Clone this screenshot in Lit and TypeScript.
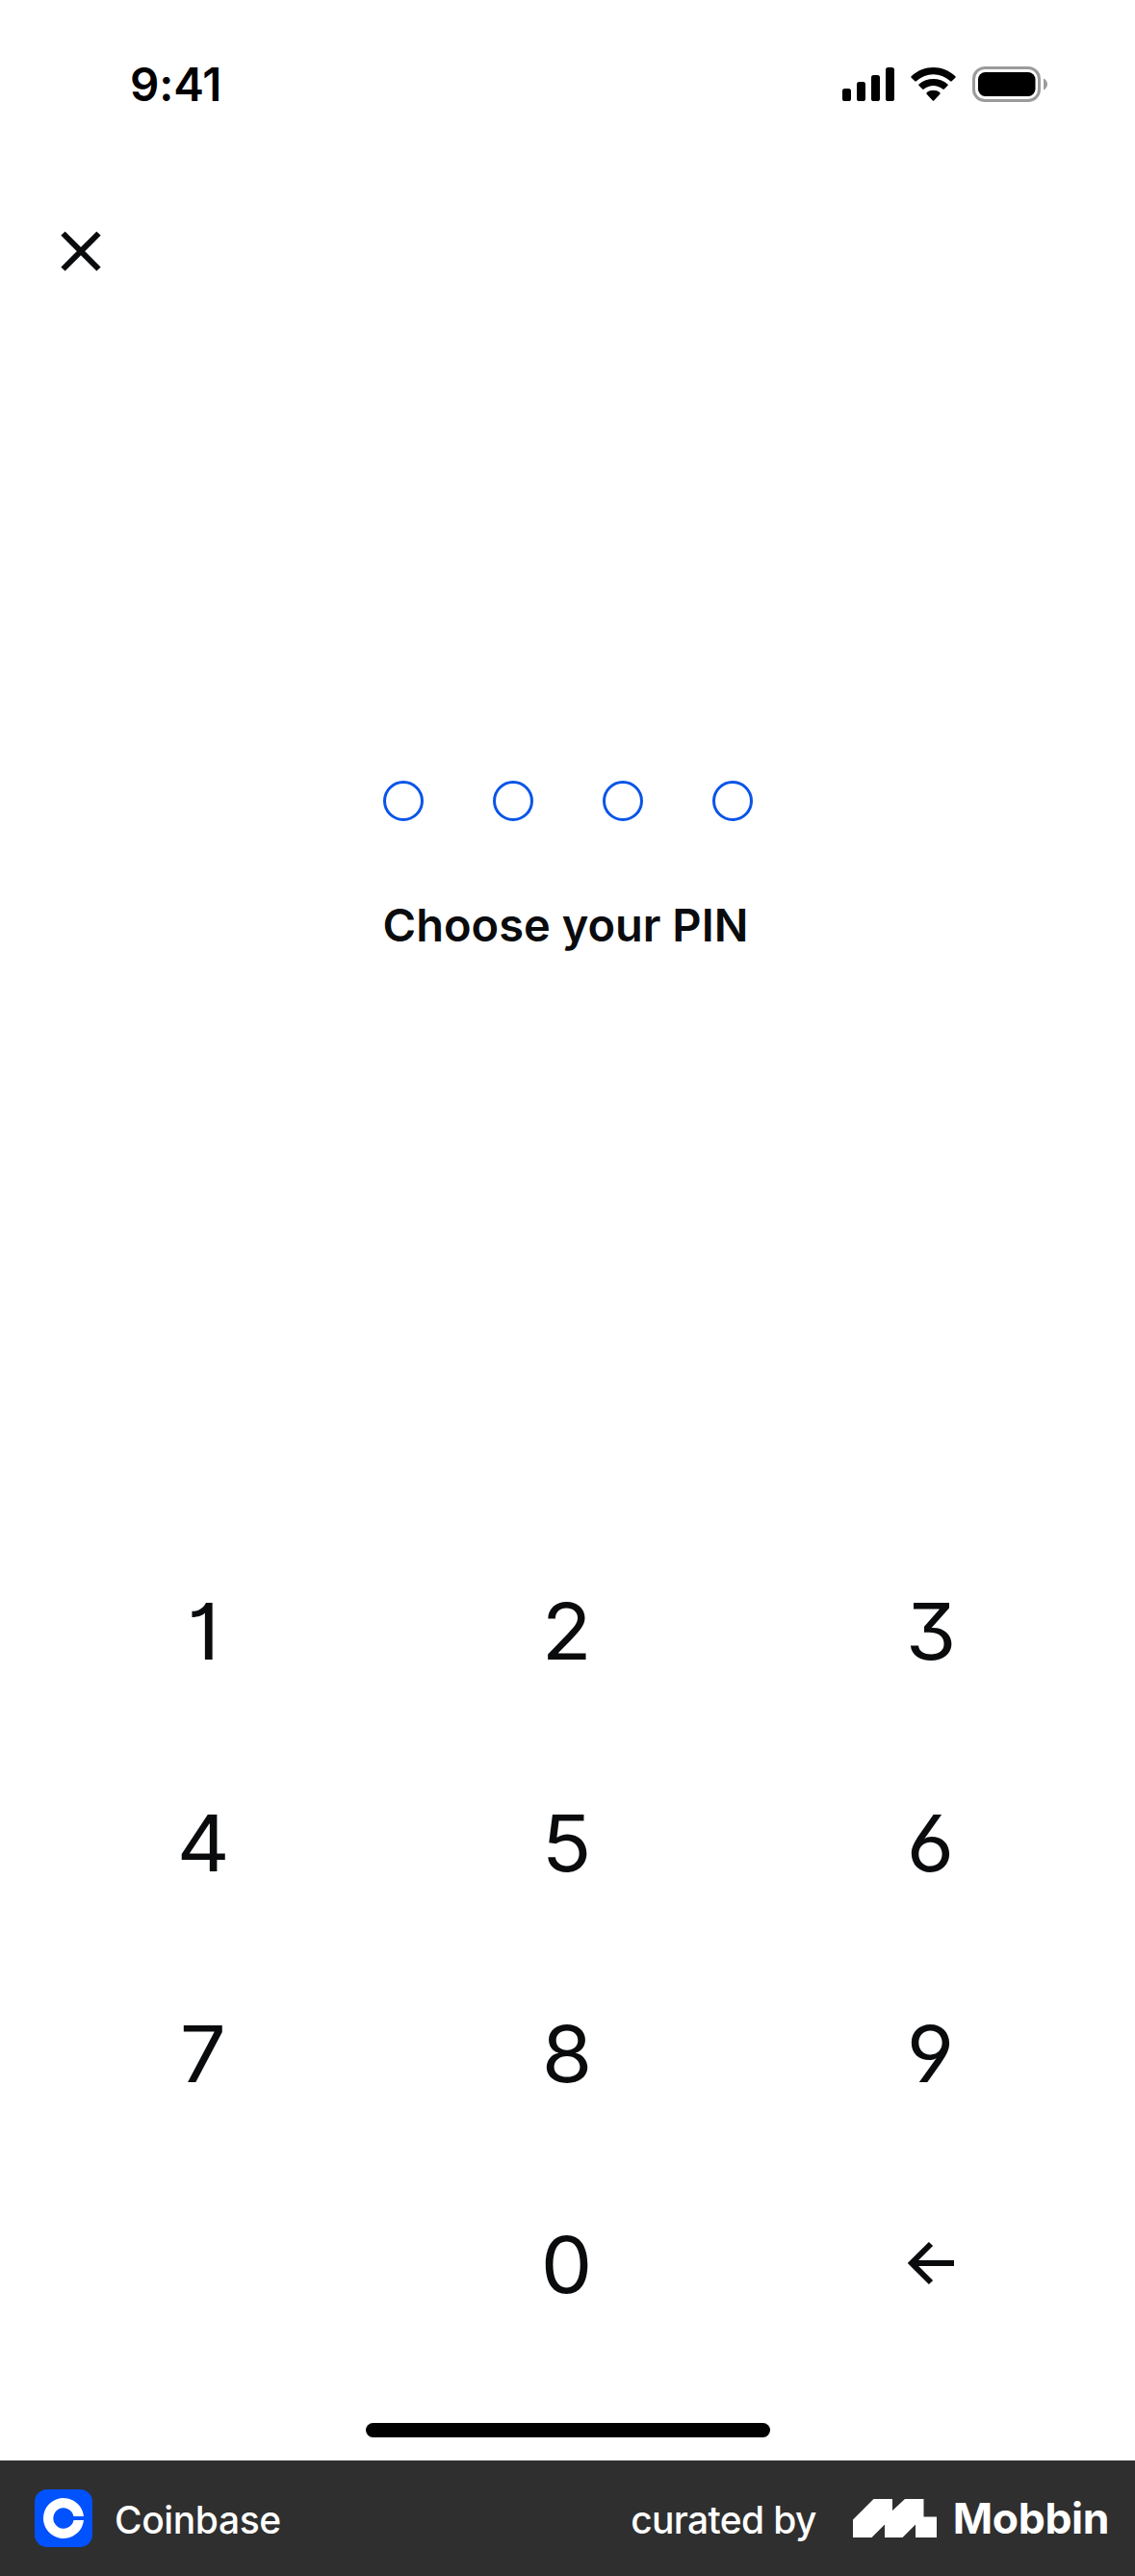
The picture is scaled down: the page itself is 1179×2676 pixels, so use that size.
import { LitElement, html, css } from "lit";
import { customElement, property } from "lit/decorators.js";

@customElement("status-bar")
class StatusBar extends LitElement {
  static styles = css`
    :host { display: flex; justify-content: space-between; align-items: center; height: 174px; padding: 0 91px 0 135px; box-sizing: border-box; }
    .time { font-size: 47.5px; font-weight: 600; line-height: 60px; padding-top: 3px; letter-spacing: -0.1px; color: #000; }
    .icons { width: 213px; height: 40px; display: block; }
  `;
  render() {
    return html`
      <span class="time">9:41</span>
      <svg class="icons" viewBox="875 67 213 40">
        <rect x="875" y="92" width="9" height="13" rx="2.6" />
        <rect x="890" y="85" width="9" height="20" rx="2.6" />
        <rect x="905" y="78" width="9" height="27" rx="2.6" />
        <rect x="920" y="70" width="9" height="35" rx="2.6" />
        <path d="M946.6 79.2Q946 80 946.7 80.8L950.3 84.3Q951 85 951.8 84.3C962.5 75 976.5 75 987.2 84.3Q988 85 988.7 84.3L992.3 80.8Q993 80 992.4 79.2C979 66.9 960 66.9 946.6 79.2Z" />
        <path d="M954.5 87.5Q953.8 88.3 954.6 89.1L958.2 92.5Q959 93.2 959.8 92.5C965.5 87.8 973.5 87.8 979.2 92.5Q980 93.2 980.8 92.5L984.4 89.1Q985.2 88.3 984.5 87.5C975.8 80.2 963.2 80.2 954.5 87.5Z" />
        <path d="M962.6 96.2Q961.9 97 962.6 97.7L968.6 104.3Q969.5 105.3 970.4 104.3L976.4 97.7Q977.1 97 976.4 96.2C972.4 93 966.6 93 962.6 96.2Z" />
        <rect x="1011.5" y="70.5" width="68" height="34" rx="11.5" fill="none" stroke="#9b9b9b" stroke-width="3" />
        <rect x="1016" y="75" width="59.5" height="25" rx="7.5" />
        <path d="M1084 81.5C1086.5 82.5 1088 85 1088 87.5S1086.5 92.5 1084 93.5Z" fill="#9b9b9b" />
      </svg>
    `;
  }
}

@customElement("pin-dots")
class PinDots extends LitElement {
  @property({ type: Number }) count = 4;
  static styles = css`
    :host { display: flex; gap: 72px; }
    .dot { width: 42px; height: 42px; box-sizing: border-box; border: 3px solid #0a55e8; border-radius: 50%; }
  `;
  render() {
    return html`${Array.from({ length: this.count }, () => html`<span class="dot"></span>`)}`;
  }
}

@customElement("key-pad")
class KeyPad extends LitElement {
  static styles = css`
    :host { display: grid; grid-template-columns: repeat(3, 378px); grid-auto-rows: 219.3px; justify-content: center; padding-right: 1px; }
    .key { display: flex; align-items: center; justify-content: center; padding: 0; border: 0; background: none; color: #0a0b0d; font-family: inherit; font-size: 81px; font-weight: 400; line-height: 100px; font-feature-settings: "cv01", "cv03", "cv04", "cv09"; }
    .digit { display: block; padding-top: 2px; transform: scaleX(1.05); }
    .back { width: 48px; height: 46px; display: block; margin-bottom: 3px; }
  `;
  render() {
    const keys = ["1", "2", "3", "4", "5", "6", "7", "8", "9", "", "0"];
    return html`
      ${keys.map((k) => (k ? html`<button class="key"><span class="digit">${k}</span></button>` : html`<span></span>`))}
      <button class="key" aria-label="Delete">
        <svg class="back" viewBox="0 0 48 46"><path d="M24 3L4 23L24 43M4 23H48" fill="none" stroke="#0a0b0d" stroke-width="6" /></svg>
      </button>
    `;
  }
}

@customElement("credit-bar")
class CreditBar extends LitElement {
  static styles = css`
    :host { display: flex; align-items: center; height: 120px; padding: 0 27px 0 36px; box-sizing: border-box; background: #2f2f2f; color: #fff; }
    .app-icon { width: 60px; height: 60px; display: block; margin-right: 23px; }
    .label { font-size: 39px; font-weight: 500; line-height: 48px; padding-top: 4px; letter-spacing: -0.4px; }
    .credit { margin-left: auto; letter-spacing: -0.65px; }
    .mark { width: 87px; height: 40px; display: block; margin: 0 17px 0 38px; }
    .brand { font-size: 44.5px; font-weight: 700; line-height: 52px; letter-spacing: -0.4px; }
  `;
  render() {
    return html`
      <svg class="app-icon" viewBox="0 0 60 60">
        <rect width="60" height="60" rx="13" fill="#0052ff" />
        <path d="M50.9 28A21 21 0 1 0 50.9 32H40.5A10.7 10.7 0 1 1 40.5 28Z" fill="#fff" />
      </svg>
      <span class="label">Coinbase</span>
      <span class="label credit">curated by</span>
      <svg class="mark" viewBox="0 0 87 40">
        <path d="M0 21.5L21.5 0H41V12L54 0H73.5V18.5H87V40H65V26.5L51.5 40H33V26.5L19.5 40H0Z" fill="#fff" />
      </svg>
      <span class="brand">Mobbin</span>
    `;
  }
}

@customElement("app-root")
class AppRoot extends LitElement {
  static styles = css`
    :host { display: flex; flex-direction: column; width: 1179px; height: 2676px; background: #fff; font-family: Inter, "Liberation Sans", sans-serif; color: #0a0b0d; overflow: hidden; }
    .nav { display: flex; height: 174px; padding: 66px 0 0 63px; box-sizing: border-box; }
    .close { padding: 0; border: 0; background: none; width: 42px; height: 42px; }
    .close-icon { width: 42px; height: 42px; display: block; }
    .prompt { display: flex; flex-direction: column; align-items: center; height: 1237px; padding-top: 463px; box-sizing: border-box; }
    .title { margin: 78px 4px 0 0; font-size: 47px; font-weight: 600; line-height: 60px; letter-spacing: 0; }
    .home { display: flex; justify-content: center; padding: 55px 0 24px; }
    .indicator { width: 420px; height: 15px; border-radius: 8px; background: #000; }
    .footer { margin-top: auto; flex: none; }
  `;
  render() {
    return html`
      <status-bar></status-bar>
      <nav class="nav">
        <button class="close" aria-label="Close">
          <svg class="close-icon" viewBox="0 0 42 42"><path d="M2.5 2.5L39.5 39.5M39.5 2.5L2.5 39.5" stroke="#0a0b0d" stroke-width="6" /></svg>
        </button>
      </nav>
      <main class="prompt">
        <pin-dots .count=${4}></pin-dots>
        <h1 class="title">Choose your PIN</h1>
      </main>
      <key-pad></key-pad>
      <div class="home"><span class="indicator"></span></div>
      <credit-bar class="footer"></credit-bar>
    `;
  }
}
